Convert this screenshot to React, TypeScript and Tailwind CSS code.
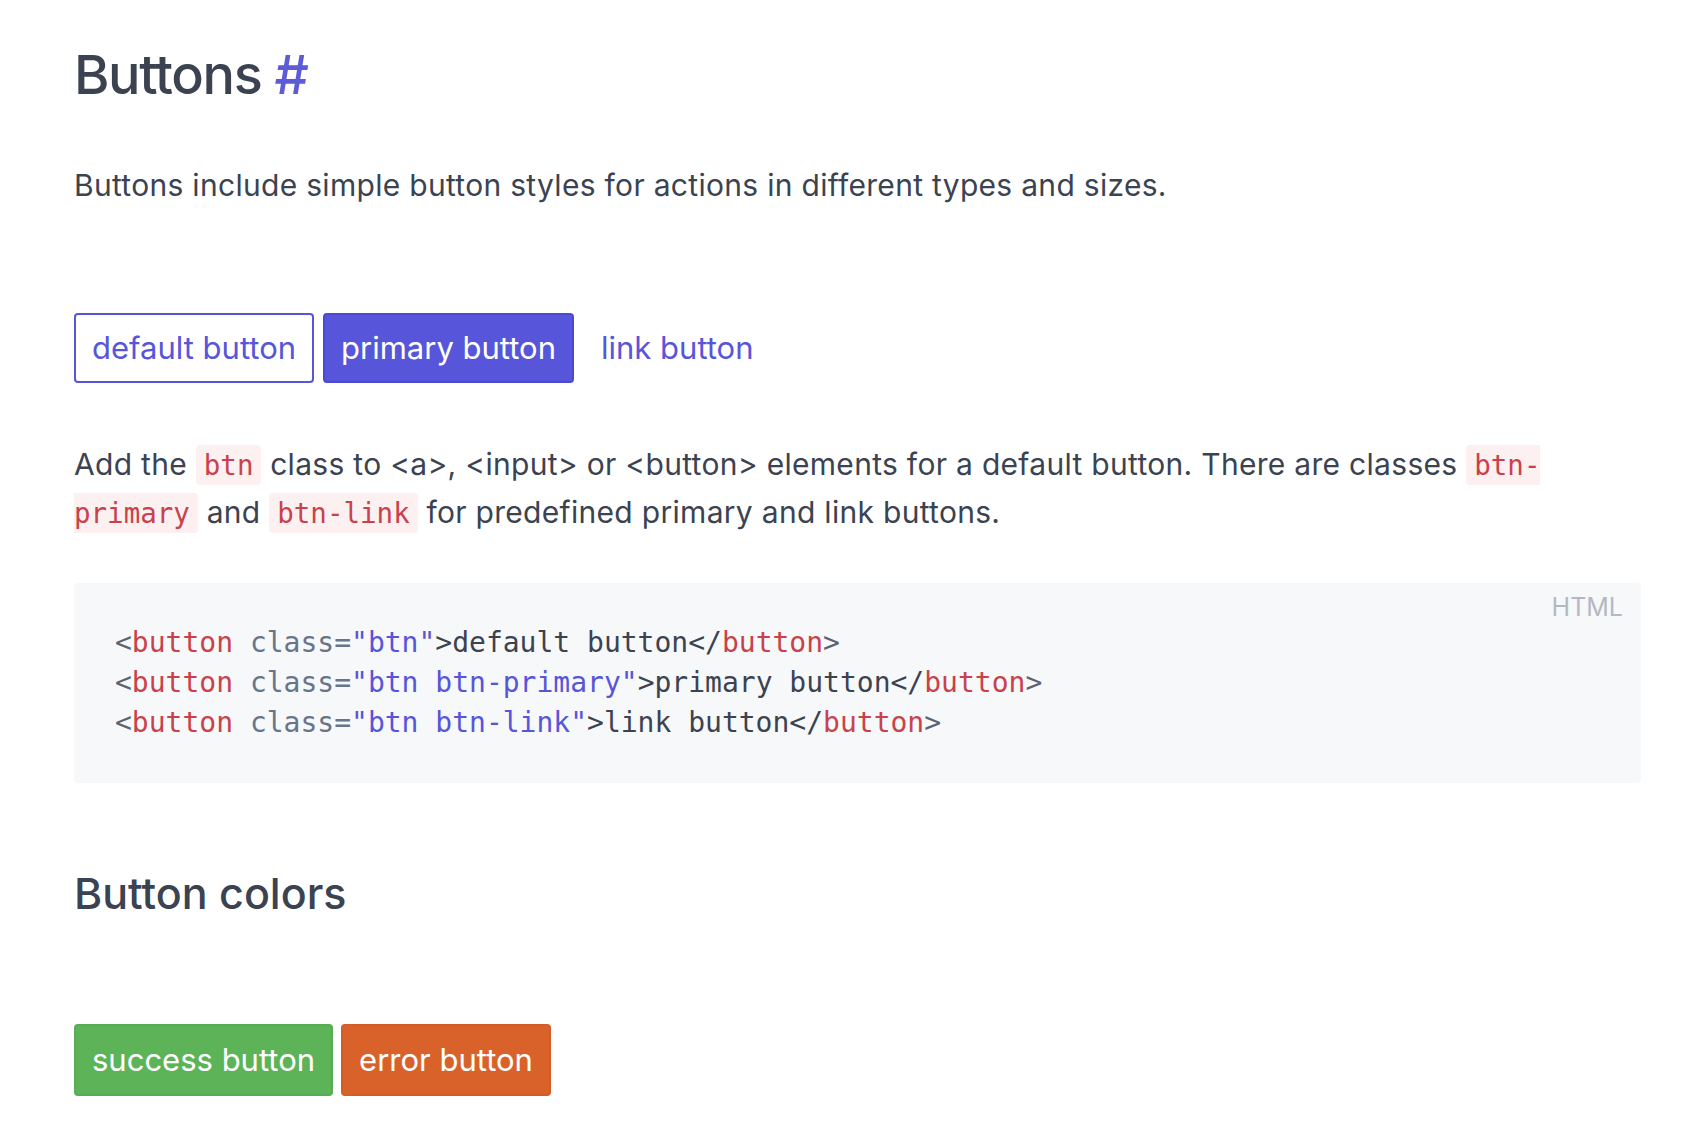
import type { ReactNode } from "react";

const sans = "font-['Inter','Noto_Sans',sans-serif]";
const mono = "font-['DejaVu_Sans_Mono','Liberation_Mono',monospace]";

function Code({ children }: { children: ReactNode }) {
	return (
		<code
			className={`${mono} rounded-[4px] bg-[#fcf0f1] px-[8px] py-[4px] text-[27.5px] tracking-normal text-[#c9424b]`}
		>
			{children}
		</code>
	);
}

function Tag({ cls, label }: { cls: string; label: string }) {
	// one line of the html sample
	return (
		<div>
			<span className="text-[#5b6373]">&lt;</span>
			<span className="text-[#c9424b]">button</span>{" "}
			<span className="text-[#66758c]">class=</span>
			<span className="text-[#5755d9]">"{cls}"</span>
			<span className="text-[#3b4351]">&gt;{label}&lt;/</span>
			<span className="text-[#c9424b]">button</span>
			<span className="text-[#5b6373]">&gt;</span>
		</div>
	);
}

export default function App() {
	return (
		<div className={`${sans} min-h-screen bg-white pl-[74px] pr-[43px] pt-[42px] text-[#3b4351]`}>
			<h1 className="text-[54px] font-medium leading-[65px] tracking-[-0.025em]">
				Buttons <span className="text-[#5c5bd8]">#</span>
			</h1>

			<p className="mt-[55px] text-[30px] leading-[47px] tracking-[0.01em]">
				Buttons include simple button styles for actions in different types and sizes.
			</p>

			<div className="mt-[104px] flex items-center text-[31px]">
				<button className="h-[70px] rounded-[4px] border-2 border-[#5755d9] bg-white px-[16px] text-[#5755d9]">
					default button
				</button>
				<button className="ml-[9px] h-[70px] rounded-[4px] border-2 border-[#4b48d6] bg-[#5755d9] px-[16px] text-white">
					primary button
				</button>
				<button className="ml-[9px] h-[70px] border-2 border-transparent px-[16px] text-[#5755d9]">
					link button
				</button>
			</div>

			<p className="mt-[58px] text-[30px] leading-[47px] tracking-[0.01em]">
				Add the <Code>btn</Code> class to &lt;a&gt;, &lt;input&gt; or &lt;button&gt; elements for a default
				button. There are classes{" "}
				<Code>
					btn-
					<br />
					primary
				</Code>{" "}
				and <Code>btn-link</Code> for predefined primary and link buttons.
			</p>

			<div className="relative mt-[46px] rounded-[4px] bg-[#f7f8f9] px-[41px] py-[40px]">
				<span className="absolute right-[18px] top-[12px] text-[25px] leading-[25px] text-[#b3b9c4]">
					HTML
				</span>
				<pre className={`${mono} text-[28px] leading-[40px]`}>
					<Tag cls="btn" label="default button" />
					<Tag cls="btn btn-primary" label="primary button" />
					<Tag cls="btn btn-link" label="link button" />
				</pre>
			</div>

			<h2 className="mt-[85px] text-[43px] font-medium leading-[50px]">Button colors</h2>

			<div className="mt-[106px] flex items-center gap-[8px] text-[31px] text-white">
				<button className="h-[72px] rounded-[4px] border-2 border-[#57ad55] bg-[#5cb358] px-[16px]">
					success button
				</button>
				<button className="h-[72px] rounded-[4px] border-2 border-[#d45d27] bg-[#d9622b] px-[16px]">
					error button
				</button>
			</div>
		</div>
	);
}
